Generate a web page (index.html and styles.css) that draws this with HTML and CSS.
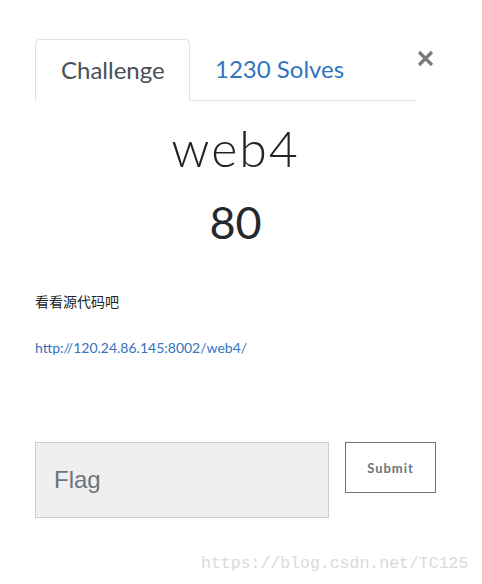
FILE: index.html
```html
<!DOCTYPE html>
<html>
<head>
<meta charset="utf-8">
<link rel="stylesheet" href="styles.css">
</head>
<body>
<div class="modal">
  <div class="header">
    <ul class="tabs">
      <li class="tab active">Challenge</li>
      <li class="tab link">1230 Solves</li>
    </ul>
    <button class="close" aria-label="Close">
      <svg width="17" height="17" viewBox="0 0 17 17"><path d="M2 2 L15 15 M15 2 L2 15" stroke="#7a7a7a" stroke-width="3.2" stroke-linecap="butt"/></svg>
    </button>
  </div>
  <h2 class="title">web4</h2>
  <h3 class="value">80</h3>
  <p class="desc">看看源代码吧</p>
  <p class="desc"><a class="url" href="#">http://120.24.86.145:8002/web4/</a></p>
  <form class="flag-row">
    <input class="flag-input" type="text" placeholder="Flag">
    <button class="submit" type="button">Submit</button>
  </form>
</div>
<div class="watermark">https://blog.csdn.net/TC125</div>
</body>
</html>
```
FILE: styles.css
```css
html, body {
  margin: 0;
  padding: 0;
  background: #ffffff;
}
body {
  font-family: Lato, "Noto Sans CJK SC", sans-serif;
  color: #212529;
}
.modal {
  width: 401px;
  padding: 39px 0 0 35px;
}
.header {
  display: flex;
  align-items: flex-start;
}
.tabs {
  list-style: none;
  margin: 0;
  padding: 0;
  display: flex;
  width: 381px;
  border-bottom: 1px solid #dee2e6;
  height: 61px;
}
.tab {
  font-size: 24px;
  height: 61px;
  box-sizing: border-box;
  display: flex;
  align-items: center;
  padding: 0 25px 2px 25px;
}
.tab.active {
  width: 155px;
  color: #495057;
  border: 1px solid #dee2e6;
  border-bottom-color: #ffffff;
  border-radius: 5px 5px 0 0;
  height: 62px;
  background: #fff;
}
.tab.link {
  color: #3473c0;
}
.close {
  border: 0;
  background: none;
  padding: 0;
  margin: 11px 0 0 1px;
  width: 17px;
  height: 17px;
  display: block;
}
.close svg { display: block; }
.title {
  margin: 17px 0 0 0;
  text-align: center;
  font-weight: 300;
  font-size: 50px;
  line-height: 60px;
  letter-spacing: 2px;
  color: #212529;
}
.value {
  margin: 15px 0 0 0;
  text-align: center;
  font-weight: 400;
  font-size: 45px;
  line-height: 58px;
  color: #25282c;
}
.desc {
  margin: 41px 0 0 0;
  font-size: 14px;
  line-height: 20px;
  color: #212529;
}
.desc + .desc {
  margin-top: 26px;
}
.url {
  color: #3473c0;
  text-decoration: none;
}
.flag-row {
  margin: 84px 0 0 0;
  display: flex;
  align-items: flex-start;
  gap: 16px;
}
.flag-input {
  width: 294px;
  height: 76px;
  box-sizing: border-box;
  background: #efefef;
  border: 1px solid #c9ced5;
  padding: 0 18px;
  font-family: "Liberation Sans", Arial, sans-serif;
  font-size: 24px;
  color: #495057;
  outline: none;
}
.flag-input::placeholder {
  color: #6c757d;
}
.submit {
  width: 93px;
  height: 51px;
  box-sizing: border-box;
  background: #fff;
  border: 1px solid #6c757d;
  font-family: Lato, sans-serif;
  font-weight: 700;
  font-size: 13px;
  letter-spacing: 1px;
  color: #6c757d;
  padding: 0;
}
.watermark {
  position: absolute;
  left: 201px;
  top: 553px;
  font-family: "Liberation Mono", monospace;
  font-size: 16.5px;
  line-height: 22px;
  color: #dadada;
  white-space: nowrap;
}
```
